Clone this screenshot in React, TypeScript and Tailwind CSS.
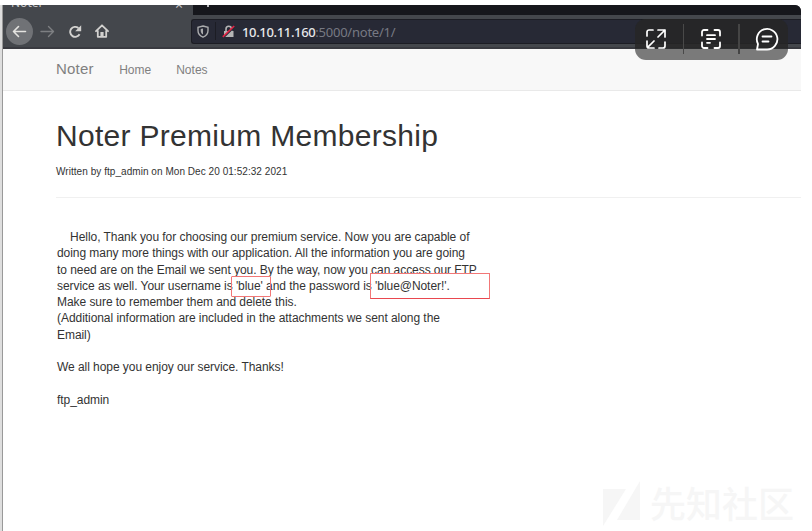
import React from "react";

const noteLines = [
  "    Hello, Thank you for choosing our premium service. Now you are capable of",
  "doing many more things with our application. All the information you are going",
  "to need are on the Email we sent you. By the way, now you can access our FTP",
  "service as well. Your username is 'blue' and the password is 'blue@Noter!'.",
  "Make sure to remember them and delete this.",
  "(Additional information are included in the attachments we sent along the",
  "Email)",
  "",
  "We all hope you enjoy our service. Thanks!",
  "",
  "ftp_admin",
];

function TabStrip() {
  return (
    <div className="flex h-[10px] overflow-hidden bg-[#44474c]">
      <div className="flex w-[190px] justify-between pl-[8px] pr-[10px] text-[12px] leading-[12px] text-[#c4c5c7]">
        <span className="-mt-[8px] font-['Noto_Sans']">Noter</span>
        <span className="-mt-[6px] font-['Noto_Sans'] text-[14px]">×</span>
      </div>
      <div className="flex-1 bg-[#16171c] pl-[14px]">
        <div className="h-[2px] w-[2px] bg-[#b9babd]" />
      </div>
    </div>
  );
}

function Toolbar() {
  return (
    <div className="flex h-[34px] items-center border-b-[2px] border-[#393a40] bg-[#44474c]">
      <div className="ml-[3px] flex size-[27px] shrink-0 items-center justify-center rounded-full bg-[#707276]">
        <svg width="15" height="13" viewBox="0 0 15 13" fill="none" stroke="#e4e3e0" strokeWidth="1.6" strokeLinecap="round" strokeLinejoin="round">
          <path d="M13.5 6.5H1.5M6.5 1.5l-5 5 5 5" />
        </svg>
      </div>
      <svg className="ml-[7px] shrink-0" width="15" height="13" viewBox="0 0 15 13" fill="none" stroke="#7d7f82" strokeWidth="1.4" strokeLinecap="round" strokeLinejoin="round">
        <path d="M1 6.5h12.5M8.5 1.5l5 5-5 5" />
      </svg>
      <svg className="ml-[13px] shrink-0" width="14" height="13" viewBox="0 0 14 13" fill="none" stroke="#d2d1cf" strokeWidth="1.9">
        <path d="M11.6 9.2A5 5 0 1 1 10.4 3" />
        <path d="M13.2 .3v6H7.2z" fill="#d2d1cf" stroke="none" />
      </svg>
      <svg className="ml-[13px] shrink-0" width="14" height="14" viewBox="0 0 14 14" fill="none" stroke="#d2d1cf" strokeWidth="1.8" strokeLinejoin="round" strokeLinecap="round">
        <path d="M1 7.2L7 1.3l6 5.9M2.8 7v5.8h8.4V7" />
        <path d="M5.4 8h3.2v5H5.4z" fill="#d2d1cf" stroke="none" />
      </svg>
      <div className="ml-[82px] flex h-[25px] flex-1 items-center rounded-l-[3px] border border-r-0 border-[#1c1d24] bg-[#272935]">
        <svg className="ml-[5px] shrink-0" width="12" height="13" viewBox="0 0 12 13" fill="none" stroke="#aaabad" strokeWidth="1.4">
          <path d="M6 1L11 2.3v3.2C11 8.8 9 11 6 12.2 3 11 1 8.8 1 5.5V2.3z" />
          <path d="M6 3.6v5.8C4.2 8.5 3.7 7.3 3.7 5.5V4.1z" fill="#aaabad" stroke="none" />
        </svg>
        <div className="ml-[6px] h-[18px] w-px bg-[#1c1d24]" />
        <svg className="ml-[6px] shrink-0" width="13" height="13" viewBox="0 0 13 13">
          <path d="M2 6h9.5v6H2z" fill="#b5b5b5" />
          <path d="M4 6V4a2.7 2.7 0 0 1 5.4 0v2" fill="none" stroke="#b5b5b5" strokeWidth="1.6" />
          <path d="M1.6 12.3L12.6 1.8" stroke="#272935" strokeWidth="1.6" />
          <path d="M.8 11.8L12.2 1" stroke="#e32445" strokeWidth="1.6" />
        </svg>
        <div className="ml-[7px] mt-[1px] whitespace-pre font-['Noto_Sans'] text-[13px] leading-[20px] tracking-[-0.24px] text-[#777983]">
          <span className="font-medium tracking-[-0.35px] text-[#e8e8ea]">10.10.11.160</span>:5000/note/1/
        </div>
      </div>
    </div>
  );
}

function CaptureControls() {
  return (
    <div className="absolute left-[635px] top-[19px] flex h-[41px] w-[153px] items-center rounded-[11px] bg-[#262626]/60">
      <div className="absolute inset-x-0 top-0 h-[29px] rounded-t-[11px] bg-[#262626]/60" />
      <div className="relative -top-px flex items-center text-white">
        <svg className="ml-[11px]" width="20" height="20" viewBox="0 0 20 20" fill="none" stroke="currentColor" strokeWidth="1.7" strokeLinecap="round" strokeLinejoin="round">
          <path d="M1 7V3a2 2 0 0 1 2-2h4M19 13v4a2 2 0 0 1-2 2h-4M12 1h7v7M19 1l-7 7M8 19H3a2 2 0 0 1-2-2v-5M1.600 18.400L8 12" />
        </svg>
        <div className="ml-[17px] h-[30px] w-px bg-[#494949]" />
        <svg className="ml-[17px]" width="20" height="20" viewBox="0 0 20 20" fill="none" stroke="currentColor" strokeWidth="1.8" strokeLinecap="round">
          <path d="M1 6.5V3a2 2 0 0 1 2-2h3.5M13.5 1H17a2 2 0 0 1 2 2v3.5M19 13.5V17a2 2 0 0 1-2 2h-3.5M6.5 19H3a2 2 0 0 1-2-2v-3.5M6 6.2h8M6 10h8M6 13.8h3" />
        </svg>
        <div className="ml-[17px] h-[30px] w-[2px] bg-[#454545]" />
        <svg className="ml-[15px]" width="24" height="24" viewBox="0 0 24 24" fill="none" stroke="currentColor" strokeWidth="1.8" strokeLinecap="round" strokeLinejoin="round">
          <path d="M2 22.5l1-5.5A10.3 10.3 0 1 1 12 22.5zM7.5 9.5h9M7.5 14.5h6" />
        </svg>
      </div>
    </div>
  );
}

function Watermark() {
  return (
    <div className="absolute left-[602px] top-[480px] flex items-center text-[#f6f6f6]">
      <svg width="39" height="48" viewBox="0 0 39 48" fill="currentColor">
        <path d="M1 9h23L1 46zM38 1v39H15z" />
      </svg>
      <span className="-mt-[5px] ml-[9px] whitespace-nowrap font-['Noto_Sans_CJK_SC',sans-serif] text-[36px] font-medium leading-[48px]">先知社区</span>
    </div>
  );
}

export default function App() {
  return (
    <div className="relative h-[531px] w-[812px] overflow-hidden bg-white pt-[5px] font-['Liberation_Sans',Arial,sans-serif]">
      <div className="flex h-[526px] w-[801px] overflow-hidden rounded-tr-[6px]">
        <div className="w-[3px] shrink-0 border-r border-[#999] bg-[#dedede]" />
        <div className="min-w-0 flex-1">
          <TabStrip />
          <Toolbar />
          <nav className="flex h-[42px] items-center border-b border-[#e9e9e9] bg-[#f8f8f8] pl-[53px] text-[12px] text-[#808080]">
            <span className="text-[15px] tracking-[0.2px]">Noter</span>
            <span className="ml-[25.5px]">Home</span>
            <span className="ml-[25px]">Notes</span>
          </nav>
          <main className="pl-[53px] text-[#333]">
            <h1 className="pt-[28px] text-[30px] leading-[34px] tracking-[0.3px]">
              <span>Noter Premium Membership</span>
            </h1>
            <p className="mt-[12px] text-[10px] leading-[14px] tracking-[0.05px]">
              <span>Written by ftp_admin on Mon Dec 20 01:52:32 2021</span>
            </p>
            <div className="mt-[18px] h-px bg-[#f0f0f0]" />
            <div className="ml-px mt-[31px] text-[12px] leading-[16.27px] tracking-[-0.055px]">
              {noteLines.map((line, i) => (
                <div key={i} className="h-[16.27px] whitespace-pre">
                  <span>{line}</span>
                </div>
              ))}
            </div>
          </main>
        </div>
      </div>
      <div className="absolute left-[231px] top-[276px] h-[21px] w-[40px] rounded-[1px] border border-[#f27777]" />
      <div className="absolute left-[370px] top-[273px] h-[26px] w-[120px] border border-[#f27777] border-b-[#e9474f]" />
      <CaptureControls />
      <Watermark />
    </div>
  );
}
